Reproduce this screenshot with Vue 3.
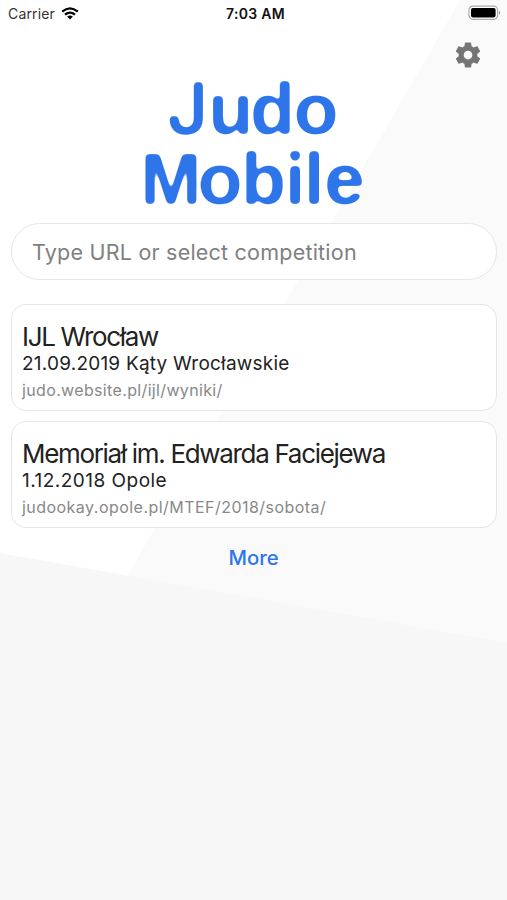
<script setup>
const competitions = [
  { name: 'IJL Wrocław', info: '21.09.2019 Kąty Wrocławskie', url: 'judo.website.pl/ijl/wyniki/', kind: 'first' },
  { name: 'Memoriał im. Edwarda Faciejewa', info: '1.12.2018 Opole', url: 'judookay.opole.pl/MTEF/2018/sobota/', kind: 'second' },
]
</script>

<template>
  <div class="screen">
    <svg class="backdrop" viewBox="0 0 507 900" aria-hidden="true">
      <path d="M460 0H507V900H0V796L129 573Z" fill="#fafafa" />
      <path d="M0 553L507 643V900H0Z" fill="#f7f7f7" />
    </svg>
    <header class="status">
      <div class="carrier">
        <span>Carrier</span>
        <svg width="18" height="13" viewBox="0 0 18 13">
          <g fill="none" stroke="#000" stroke-width="2.3">
            <path d="M1.2 4.7Q9 -2 16.8 4.7" />
            <path d="M4 7.7Q9 3.5 14 7.7" />
          </g>
          <path d="M6.1 9.5Q9 7.3 11.9 9.5L9 12.5Z" />
        </svg>
      </div>
      <time>7:03 AM</time>
      <div class="power">
        <svg width="33" height="16" viewBox="0 0 33 16">
          <rect x="1" y="1.1" width="28.6" height="13.2" rx="4" fill="#fff" stroke="#aaa" stroke-width="1.2" />
          <rect x="3" y="3" width="24.6" height="9.4" rx="1.8" />
          <path d="M31 5.8Q33.5 7.7 31 9.6Z" fill="#999" />
        </svg>
      </div>
    </header>
    <div class="toolbar">
      <svg width="30" height="30" viewBox="0 0 24 24" fill="#757575">
        <path d="M19.43 12.98c.04-.32.07-.64.07-.98s-.03-.66-.07-.98l2.11-1.65c.19-.15.24-.42.12-.64l-2-3.46c-.12-.22-.39-.3-.61-.22l-2.49 1c-.52-.4-1.08-.73-1.69-.98l-.38-2.65A.488.488 0 0 0 14 2h-4c-.25 0-.46.18-.49.42l-.38 2.65c-.61.25-1.17.59-1.69.98l-2.49-1c-.23-.09-.49 0-.61.22l-2 3.46c-.13.22-.07.49.12.64l2.11 1.65c-.04.32-.07.65-.07.98s.03.66.07.98l-2.11 1.65c-.19.15-.24.42-.12.64l2 3.46c.12.22.39.3.61.22l2.49-1c.52.4 1.08.73 1.69.98l.38 2.65c.03.24.24.42.49.42h4c.25 0 .46-.18.49-.42l.38-2.65c.61-.25 1.17-.59 1.69-.98l2.49 1c.23.09.49 0 .61-.22l2-3.46c.12-.22.07-.49-.12-.64l-2.11-1.65zM12 15.5c-1.93 0-3.5-1.57-3.5-3.5s1.57-3.5 3.5-3.5 3.5 1.57 3.5 3.5-1.57 3.5-3.5 3.5z" />
      </svg>
    </div>
    <svg class="logo" width="240" height="144" viewBox="134 72 240 144">
      <defs>
        <!-- Softens then re-sharpens the lettering, which rounds its corners -->
        <filter id="round" x="134" y="62" width="240" height="164" filterUnits="userSpaceOnUse" color-interpolation-filters="sRGB">
          <feGaussianBlur stdDeviation="2.2" />
          <feComponentTransfer result="shape"><feFuncA type="linear" slope="5.5" intercept="-2.35" /></feComponentTransfer>
          <feFlood flood-color="#2e75ea" />
          <feComposite operator="in" in2="shape" />
        </filter>
      </defs>
      <g filter="url(#round)">
        <text y="133.9" x="166.7 208.5 250.2 293.8"><tspan class="initial">J</tspan>udo</text>
        <text y="204.3" x="140.4 197.8 241.2 285.1 304.1 324.3">Mobile</text>
        <circle cx="295.2" cy="156.4" r="4.9" />
      </g>
    </svg>
    <div class="search"><span>Type URL or select competition</span></div>
    <main class="list">
      <article v-for="c in competitions" :key="c.url" class="card" :class="c.kind">
        <h2><span>{{ c.name }}</span></h2>
        <p class="info"><span>{{ c.info }}</span></p>
        <p class="url"><span>{{ c.url }}</span></p>
      </article>
    </main>
    <div class="more"><span>More</span></div>
  </div>
</template>

<style>
body { margin: 0; background: #fff; }
</style>

<style scoped>
.screen { position: relative; isolation: isolate; box-sizing: border-box; width: 507px; height: 900px; overflow: hidden; font-family: Inter, "Liberation Sans", sans-serif; color: #222; }
.backdrop { position: absolute; inset: 0; z-index: -1; width: 507px; height: 900px; }
svg { display: block; }
.status { display: grid; grid-template-columns: 1fr auto 1fr; align-items: center; height: 28px; box-sizing: border-box; padding: 0 5px 2px 8px; font-size: 14px; }
.carrier { display: flex; align-items: center; gap: 6px; color: #333; letter-spacing: .15px; }
time { padding-left: 1px; font-weight: 600; color: #111; font-size: 14px; letter-spacing: .3px; }
.power { display: flex; justify-content: flex-end; padding-right: 1px; }
.toolbar { display: flex; justify-content: flex-end; height: 44px; box-sizing: border-box; padding: 12px 24px 0 0; }
.logo { margin: 0 auto; fill: #2e75ea; overflow: visible; }
.logo text { font-family: "Liberation Sans", sans-serif; font-weight: 700; font-size: 73px; }
.logo .initial { font-family: Inter, sans-serif; font-weight: 600; font-size: 71.5px; }
.search { display: flex; align-items: center; box-sizing: border-box; height: 57px; margin: 7px 10px 0 11px; padding-left: 20px; border: 1.5px solid #e6e6e6; border-radius: 29px; background: #fff; color: #808080; font-size: 21.5px; letter-spacing: .22px; }
.list { display: flex; flex-direction: column; gap: 10px; margin: 24px 10px 0 11px; }
.card { box-sizing: border-box; height: 107px; padding: 17px 10px 0; border: 1.5px solid #e6e6e6; border-radius: 15px; background: #fff; }
h2, p { margin: 0; font-weight: 400; white-space: nowrap; }
h2 { font-size: 26px; line-height: 30px; letter-spacing: -1.32px; }
.info { font-size: 19px; line-height: 24px; letter-spacing: .22px; }
.url { font-size: 16px; line-height: 29px; color: #888; letter-spacing: .35px; }
.second .info { letter-spacing: .48px; }
.second .url { letter-spacing: .46px; }
.more { display: flex; justify-content: center; margin-top: 16px; font-size: 20.3px; line-height: 28px; color: #2e75ea; font-weight: 500; }
</style>
